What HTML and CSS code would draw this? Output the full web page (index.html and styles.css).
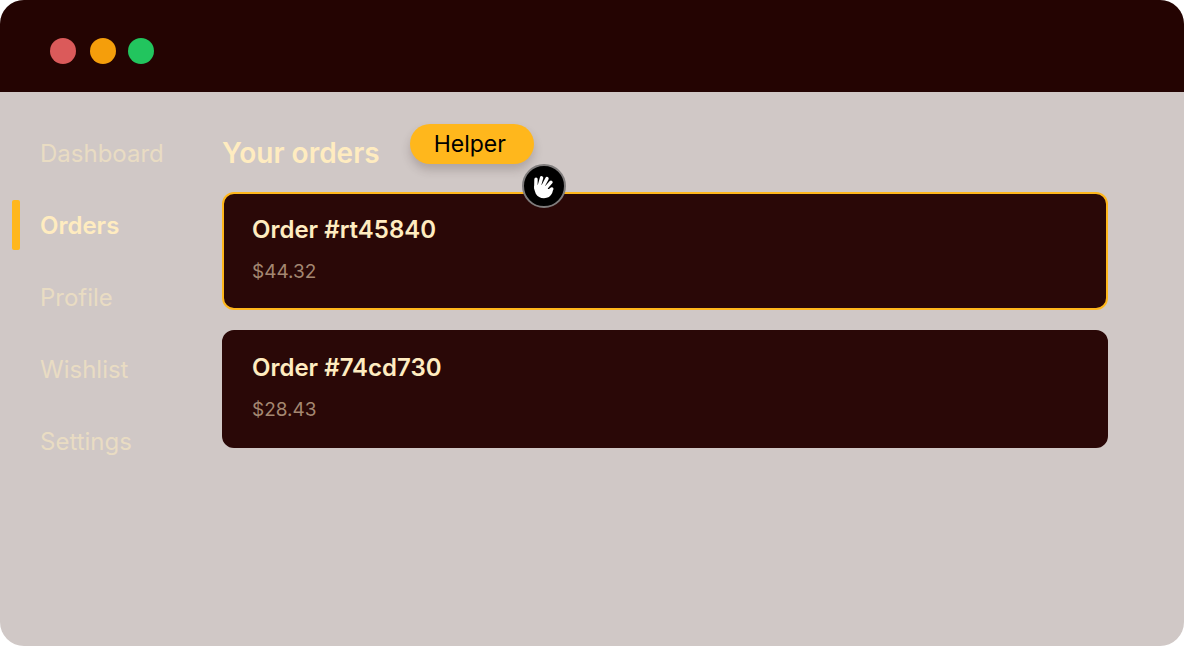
FILE: index.html
```html
<!DOCTYPE html>
<html lang="en">
<head>
<meta charset="utf-8">
<meta name="viewport" content="width=device-width, initial-scale=1">
<title>Your orders</title>
<link rel="stylesheet" href="styles.css">
</head>
<body>
<div class="window">
  <header class="titlebar">
    <span class="dot dot-close"></span>
    <span class="dot dot-minimize"></span>
    <span class="dot dot-expand"></span>
  </header>
  <div class="content">
    <nav class="sidebar">
      <a class="nav-link" href="#">Dashboard</a>
      <a class="nav-link active" href="#" aria-current="page">Orders</a>
      <a class="nav-link" href="#">Profile</a>
      <a class="nav-link" href="#">Wishlist</a>
      <a class="nav-link" href="#">Settings</a>
    </nav>
    <main class="main">
      <div class="heading">
        <h1 class="title">Your orders</h1>
        <div class="helper">
          <span class="helper-label">Helper</span>
          <svg class="helper-hand" viewBox="0 0 44 44" aria-hidden="true">
            <circle cx="22" cy="22" r="21" fill="#000" stroke="#7f7c7c" stroke-width="2"/>
            <path d="M14 15.2L13.8 24M19.6 13.8L17 23M25 14.6L20 24M29 18.2L22.5 25.5" fill="none" stroke="#fff" stroke-width="3.4" stroke-linecap="round"/>
            <path d="M12.1 22L17 20.5L22 21.2L25.9 22.9Q25.1 24.4 26 24.9Q26.8 25.2 27.6 24.4L28.9 23.4Q30.4 22.7 31.3 23.9Q31.8 25 31 26.3L30.2 29Q27.8 34.2 22 34.2Q16.4 34.2 13.8 29.8Q12.1 26.5 12.1 22Z" fill="#fff"/>
          </svg>
        </div>
      </div>
      <section class="orders">
        <article class="order selected">
          <h2 class="order-name">Order #rt45840</h2>
          <p class="order-price">$44.32</p>
        </article>
        <article class="order">
          <h2 class="order-name">Order #74cd730</h2>
          <p class="order-price">$28.43</p>
        </article>
      </section>
    </main>
  </div>
</div>
</body>
</html>
```
FILE: styles.css
```css
* { box-sizing: border-box; }

body {
  margin: 0;
  background: #fff;
  font-family: Inter, "Liberation Sans", sans-serif;
}

.window {
  display: flex;
  flex-direction: column;
  min-height: 100vh;
  border-radius: 24px;
  overflow: hidden;
  background: #d0c8c6;
}

.titlebar {
  display: flex;
  align-items: center;
  gap: 12px;
  padding: 38px 50px 28px;
  background: #240402;
}

.dot {
  width: 26px;
  height: 26px;
  border-radius: 50%;
}

.dot-close {
  margin-right: 2px;
  background: #db5a5a;
}

.dot-minimize { background: #f59e0b; }
.dot-expand { background: #22c55e; }

.content {
  display: flex;
  flex: 1;
}

.sidebar {
  display: flex;
  flex-direction: column;
  flex: 0 0 222px;
  gap: 20px;
  padding: 36px 12px;
}

.nav-link {
  position: relative;
  padding-left: 28px;
  font-size: 24px;
  line-height: 52px;
  color: #e9dcc3;
  text-decoration: none;
}

.nav-link.active {
  font-weight: 600;
  color: #ffecc0;
}

.nav-link.active::before {
  content: "";
  position: absolute;
  left: 0;
  top: 0;
  width: 8px;
  height: 50px;
  border-radius: 2px;
  background: #ffb71c;
}

.main {
  flex: 1;
  padding: 32px 76px 32px 0;
}

.heading {
  display: flex;
  align-items: flex-start;
  gap: 30px;
  margin-bottom: 28px;
}

.title {
  margin: 0;
  font-size: 28px;
  font-weight: 600;
  line-height: 58px;
  height: 40px;
  color: #ffecc0;
}

.helper {
  position: relative;
  padding: 0 28px 0 24px;
  border-radius: 20px;
  background: #ffb71c;
  box-shadow: 0 6px 10px rgba(60, 40, 40, 0.22);
  font-size: 23px;
  line-height: 40px;
  color: #000;
}

.helper-hand {
  position: absolute;
  right: -32px;
  bottom: -44px;
  width: 44px;
  height: 44px;
}

.orders {
  display: flex;
  flex-direction: column;
  gap: 20px;
}

.order {
  padding: 20px 28px 22px;
  border: 2px solid #2a0807;
  border-radius: 12px;
  background: #2a0807;
}

.order.selected { border-color: #ffb71c; }

.order-name {
  margin: 0 0 12px;
  font-size: 24px;
  font-weight: 600;
  line-height: 32px;
  color: #ffecc0;
}

.order-price {
  margin: 0;
  font-size: 19px;
  line-height: 28px;
  color: #a48771;
}
```
